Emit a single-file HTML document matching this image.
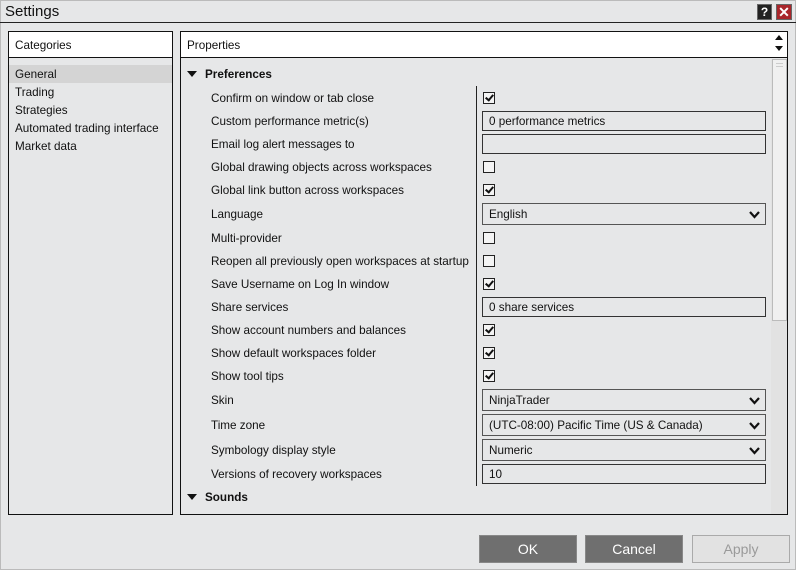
<!DOCTYPE html>
<html><head><style>
*{margin:0;padding:0;box-sizing:border-box}
body{width:796px;height:570px;background:#e6e7e8;font-family:"Liberation Sans",sans-serif;font-size:11.7px;color:#111;position:relative;overflow:hidden}
.a{position:absolute}
.t{font-size:15px;left:5px;top:3px}
.lbl{position:absolute;left:211px;white-space:nowrap;margin-top:1px}
.cb{position:absolute;left:483px;width:12px;height:12px;border:1px solid #222;background:#f4f4f4}
.cb.on::after{content:"";position:absolute;left:3px;top:0px;width:3px;height:6px;border:solid #111;border-width:0 2px 2px 0;transform:rotate(40deg)}
.tb{position:absolute;left:482px;width:284px;height:20px;border:1px solid #333;padding:3px 6px 0}
.dd{position:absolute;left:482px;width:284px;height:22px;border:1px solid #555;padding:4px 6px 0}
.dd svg{position:absolute;right:5px;top:7px}
.btn{position:absolute;top:535px;width:98px;height:28px;background:#6f6f6f;border:1px solid #888;color:#fff;font-size:14px;text-align:center;line-height:26px}
</style></head><body>
<div class="a" style="left:0;top:0;width:796px;height:570px;border:1px solid #bbb"></div>
<div class="a t">Settings</div>
<div class="a" style="left:757px;top:4px;width:15px;height:16px;background:#222;border:1px solid #666;color:#fff;font-weight:bold;font-size:12px;text-align:center;line-height:14px">?</div>
<div class="a" style="left:776px;top:4px;width:16px;height:16px;background:#a8262b;border:1px solid #666;color:#fff;font-weight:bold;font-size:14px;text-align:center;line-height:14px">✕</div>
<div class="a" style="left:0;top:22px;width:796px;height:1px;background:#222"></div>

<div class="a" style="left:8px;top:31px;width:165px;height:484px;border:1px solid #111"></div>
<div class="a" style="left:9px;top:32px;width:163px;height:26px;background:#fff;border-bottom:1px solid #111;padding:7px 6px 0">Categories</div>
<div class="a" style="left:9px;top:65px;width:163px;height:18px;background:#d4d4d4"></div>
<div class="a" style="left:15px;top:68px">General</div>
<div class="a" style="left:15px;top:86px">Trading</div>
<div class="a" style="left:15px;top:104px">Strategies</div>
<div class="a" style="left:15px;top:122px">Automated trading interface</div>
<div class="a" style="left:15px;top:140px">Market data</div>

<div class="a" style="left:180px;top:31px;width:608px;height:484px;border:1px solid #111"></div>
<div class="a" style="left:181px;top:32px;width:606px;height:26px;background:#fff;border-bottom:1px solid #111;padding:7px 6px 0">Properties</div>
<div class="a" style="left:775px;top:35px;width:0;height:0;border:4px solid transparent;border-bottom:5px solid #111;border-top:0"></div>
<div class="a" style="left:775px;top:46px;width:0;height:0;border:4px solid transparent;border-top:5px solid #111;border-bottom:0"></div>
<div class="a" style="left:771px;top:59px;width:16px;height:455px;background:#e2e2e2"></div>
<div class="a" style="left:772px;top:59px;width:15px;height:262px;background:#f0f0f0;border:1px solid #bbb"></div>
<div class="a" style="left:776px;top:63px;width:7px;height:1px;background:#ccc"></div>
<div class="a" style="left:776px;top:66px;width:7px;height:1px;background:#ccc"></div>

<div class="a" style="left:187px;top:71px;border:5px solid transparent;border-top:6px solid #111;border-bottom:0"></div>
<div class="a" style="left:205px;top:68px;font-weight:bold">Preferences</div>
<div class="a" style="left:476px;top:86px;width:1px;height:400px;background:#222"></div>

<div class="lbl" style="top:91px">Confirm on window or tab close</div><div class="cb on" style="top:92px"></div>
<div class="lbl" style="top:114px">Custom performance metric(s)</div><div class="tb" style="top:111px">0 performance metrics</div>
<div class="lbl" style="top:137px">Email log alert messages to</div><div class="tb" style="top:134px"></div>
<div class="lbl" style="top:160px">Global drawing objects across workspaces</div><div class="cb" style="top:161px"></div>
<div class="lbl" style="top:183px">Global link button across workspaces</div><div class="cb on" style="top:184px"></div>
<div class="lbl" style="top:207px">Language</div><div class="dd" style="top:203px">English<svg width="11" height="8"><path d="M1 1L5.5 6L10 1" fill="none" stroke="#111" stroke-width="2.2"/></svg></div>
<div class="lbl" style="top:231px">Multi-provider</div><div class="cb" style="top:232px"></div>
<div class="lbl" style="top:254px">Reopen all previously open workspaces at startup</div><div class="cb" style="top:255px"></div>
<div class="lbl" style="top:277px">Save Username on Log In window</div><div class="cb on" style="top:278px"></div>
<div class="lbl" style="top:300px">Share services</div><div class="tb" style="top:297px">0 share services</div>
<div class="lbl" style="top:323px">Show account numbers and balances</div><div class="cb on" style="top:324px"></div>
<div class="lbl" style="top:346px">Show default workspaces folder</div><div class="cb on" style="top:347px"></div>
<div class="lbl" style="top:369px">Show tool tips</div><div class="cb on" style="top:370px"></div>
<div class="lbl" style="top:393px">Skin</div><div class="dd" style="top:389px">NinjaTrader<svg width="11" height="8"><path d="M1 1L5.5 6L10 1" fill="none" stroke="#111" stroke-width="2.2"/></svg></div>
<div class="lbl" style="top:418px">Time zone</div><div class="dd" style="top:414px">(UTC-08:00) Pacific Time (US &amp; Canada)<svg width="11" height="8"><path d="M1 1L5.5 6L10 1" fill="none" stroke="#111" stroke-width="2.2"/></svg></div>
<div class="lbl" style="top:443px">Symbology display style</div><div class="dd" style="top:439px">Numeric<svg width="11" height="8"><path d="M1 1L5.5 6L10 1" fill="none" stroke="#111" stroke-width="2.2"/></svg></div>
<div class="lbl" style="top:467px">Versions of recovery workspaces</div><div class="tb" style="top:464px">10</div>

<div class="a" style="left:187px;top:494px;border:5px solid transparent;border-top:6px solid #111;border-bottom:0"></div>
<div class="a" style="left:205px;top:491px;font-weight:bold">Sounds</div>

<div class="btn" style="left:479px">OK</div>
<div class="btn" style="left:585px">Cancel</div>
<div class="btn" style="left:692px;background:#e2e2e2;border-color:#aaa;color:#9a9a9a">Apply</div>
</body></html>
